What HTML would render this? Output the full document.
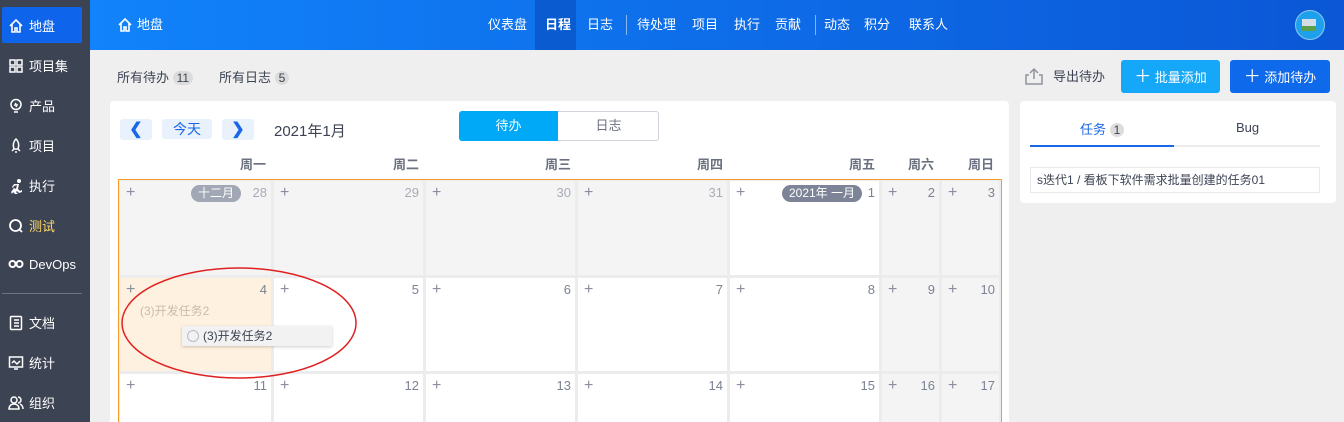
<!DOCTYPE html>
<html style="width:1344px;height:422px;overflow:hidden"><head><meta charset="utf-8"><style>
*{box-sizing:border-box;margin:0;padding:0}
html,body{overflow:hidden}
body{width:1344px;height:422px;overflow:hidden;background:#efefef;font-family:"Liberation Sans","Noto Sans CJK SC",sans-serif;font-size:13px;color:#3c4353;position:relative}
.abs{position:absolute}
#side{left:0;top:0;width:90px;height:422px;background:#3c4353}
.si{position:absolute;left:8px;color:#fff;font-size:13px;display:flex;align-items:center;gap:5px}
.si svg{width:16px;height:16px}
#top{left:90px;top:0;width:1254px;height:50px;background:linear-gradient(90deg,#1183fb,#0b57d6)}
.nav{position:absolute;top:0;height:50px;line-height:50px;color:#fff;font-size:13px}
.sep{position:absolute;top:15px;width:1px;height:20px;background:rgba(255,255,255,.5)}
.cell{position:absolute;background:#fff}
.cell.g{background:#f4f4f4}
.pl{position:absolute;left:6px;top:3px;color:#8a8fa0;font-size:16px;line-height:18px}
.dn{position:absolute;right:4px;top:4px;color:#7b8294;font-size:13px}
.cell.g .dn.o{color:#a7acb8}
.wk{position:absolute;top:154px;font-size:13px;color:#6b7180;font-weight:bold}
</style></head><body>
<div id="side" class="abs">
 <div class="abs" style="left:2px;top:7px;width:80px;height:36px;background:#0e64ea;border-radius:2px"></div>
 <div class="si" style="top:16px"><svg viewBox="0 0 16 16" fill="none" stroke="#fff" stroke-width="1.6"><path d="M2 8L8 2l6 6M4 6v8h3v-4h2v4h3V6"/></svg>地盘</div>
 <div class="si" style="top:56px"><svg viewBox="0 0 16 16" fill="none" stroke="#fff" stroke-width="1.5"><rect x="2" y="2" width="5" height="5"/><rect x="9" y="2" width="5" height="5"/><rect x="2" y="9" width="5" height="5"/><rect x="9" y="9" width="5" height="5"/></svg>项目集</div>
 <div class="si" style="top:96px"><svg viewBox="0 0 16 16" fill="none" stroke="#fff" stroke-width="1.5"><circle cx="8" cy="6.5" r="5"/><path d="M6 14h4M8 5l-1 2h2l-1 2"/></svg>产品</div>
 <div class="si" style="top:136px"><svg viewBox="0 0 16 16" fill="none" stroke="#fff" stroke-width="1.5"><path d="M8 1c3 3 3 7 2 10H6C5 8 5 4 8 1zM6 11l-2 2M10 11l2 2M8 13v2"/></svg>项目</div>
 <div class="si" style="top:176px"><svg viewBox="0 0 16 16" fill="#fff"><circle cx="11" cy="3" r="2"/><path d="M3 14l3-4 2 1 1-4-3 1-1 2-1-1 2-3h5l-1 5 2 2 2-1v2l-3 1-2-2-1 1 2 2h-3l-2-2-1 2z"/></svg>执行</div>
 <div class="si" style="top:216px;color:#ffd966"><svg viewBox="0 0 16 16" fill="none" stroke="#fff" stroke-width="1.8"><circle cx="7.5" cy="7.5" r="5.5"/><path d="M11 11l3 3"/></svg>测试</div>
 <div class="si" style="top:256px"><svg viewBox="0 0 16 16" fill="none" stroke="#fff" stroke-width="2"><circle cx="4.5" cy="8" r="3"/><circle cx="11.5" cy="8" r="3"/></svg>DevOps</div>
 <div class="abs" style="left:2px;top:293px;width:80px;height:1px;background:#6b7384"></div>
 <div class="si" style="top:313px"><svg viewBox="0 0 16 16" fill="none" stroke="#fff" stroke-width="1.5"><rect x="2.5" y="1.5" width="11" height="13" rx="1"/><path d="M6 5h5M6 8h5M6 11h5"/></svg>文档</div>
 <div class="si" style="top:353px"><svg viewBox="0 0 16 16" fill="none" stroke="#fff" stroke-width="1.5"><rect x="1.5" y="2" width="13" height="10"/><path d="M4 8l2-2 3 3 3-3M6 14h4"/></svg>统计</div>
 <div class="si" style="top:393px"><svg viewBox="0 0 16 16" fill="none" stroke="#fff" stroke-width="1.5"><circle cx="6" cy="5" r="3"/><path d="M1 14c0-3 2-5 5-5s5 2 5 5zM10 2a3 3 0 010 6M12 9c2 1 3 3 3 5"/></svg>组织</div>
</div>
<div id="top" class="abs">
 <div class="nav" style="left:27px;display:flex;align-items:center;gap:4px"><svg width="16" height="16" viewBox="0 0 16 16" fill="none" stroke="#fff" stroke-width="1.6"><path d="M2 8L8 2l6 6M4 6v8h3v-4h2v4h3V6"/></svg>地盘</div>
 <div class="nav" style="left:398px">仪表盘</div>
 <div class="abs" style="left:445px;top:0;width:41px;height:50px;background:#0a5bd0"></div>
 <div class="nav" style="left:455px;font-weight:bold">日程</div>
 <div class="nav" style="left:497px">日志</div>
 <div class="sep" style="left:536px"></div>
 <div class="nav" style="left:547px">待处理</div>
 <div class="nav" style="left:602px">项目</div>
 <div class="nav" style="left:644px">执行</div>
 <div class="nav" style="left:685px">贡献</div>
 <div class="sep" style="left:725px"></div>
 <div class="nav" style="left:734px">动态</div>
 <div class="nav" style="left:774px">积分</div>
 <div class="nav" style="left:819px">联系人</div>
 <div class="abs" style="left:1205px;top:10px;width:30px;height:30px;border-radius:50%;background:#1ea0ec;border:1px solid #8cc8f0"><div class="abs" style="left:6px;top:8px;width:14px;height:12px;background:#d5dde6;border-bottom:5px solid #5aa04a"></div></div>
</div>
<div class="abs" style="left:117px;top:67px">所有待办 <span style="display:inline-block;background:#dcdcdc;border-radius:8px;padding:0 4px;font-size:12px">11</span></div>
<div class="abs" style="left:219px;top:67px">所有日志 <span style="display:inline-block;background:#dcdcdc;border-radius:8px;padding:0 4px;font-size:12px">5</span></div>
<div class="abs" style="left:1024px;top:66px;color:#3c4353;display:flex;gap:9px;align-items:center"><svg width="20" height="18" viewBox="0 0 20 18" fill="none" stroke="#8f949e" stroke-width="1.5"><path d="M10 12V2M6 6l4-4 4 4M5 8H2v9h16V8h-3"/></svg>导出待办</div>
<div class="abs" style="left:1121px;top:60px;width:99px;height:33px;background:#16a8f8;border-radius:3px;color:#fff;line-height:33px;text-align:center;font-size:13px"><b style="font-size:17px;font-weight:normal">＋</b> 批量添加</div>
<div class="abs" style="left:1230px;top:60px;width:100px;height:33px;background:#0e6aea;border-radius:3px;color:#fff;line-height:33px;text-align:center;font-size:13px"><b style="font-size:17px;font-weight:normal">＋</b> 添加待办</div>

<div class="abs" style="left:110px;top:101px;width:899px;height:330px;background:#fff;border-radius:4px"></div>
<div class="abs" style="left:120px;top:119px;width:32px;height:21px;background:#e8f1fc;border-radius:3px;color:#1967e6;text-align:center;line-height:21px;font-weight:bold;font-size:16px">❮</div>
<div class="abs" style="left:162px;top:119px;width:50px;height:20px;background:#e8f1fc;border-radius:3px;color:#1967e6;text-align:center;line-height:20px;font-size:14px">今天</div>
<div class="abs" style="left:222px;top:119px;width:32px;height:21px;background:#e8f1fc;border-radius:3px;color:#1967e6;text-align:center;line-height:21px;font-weight:bold;font-size:16px">❯</div>
<div class="abs" style="left:274px;top:120px;font-size:15px;color:#3c4353">2021年1月</div>
<div class="abs" style="left:459px;top:111px;width:200px;height:30px;border:1px solid #d0d3da;border-radius:3px"></div>
<div class="abs" style="left:459px;top:111px;width:99px;height:30px;background:#00a8f8;border-radius:3px 0 0 3px;color:#fff;text-align:center;line-height:30px">待办</div>
<div class="abs" style="left:558px;top:111px;width:101px;height:30px;color:#6b7180;text-align:center;line-height:30px">日志</div>
<div class="wk" style="left:240px">周一</div><div class="wk" style="left:393px">周二</div><div class="wk" style="left:545px">周三</div><div class="wk" style="left:697px">周四</div><div class="wk" style="left:849px">周五</div><div class="wk" style="left:908px">周六</div><div class="wk" style="left:968px">周日</div>

<div class="abs" style="left:118px;top:179px;width:884px;height:260px;border:1px solid #f39c2c;background:#ececec"></div>
<div class="cell g" style="left:120px;top:181px;width:151px;height:94px"><span class="pl">+</span><span class="abs" style="right:30px;top:4px;background:#a2a7b5;color:#fff;border-radius:9px;padding:0 7px;font-size:12px;line-height:17px">十二月</span><span class="dn o">28</span></div>
<div class="cell g" style="left:274px;top:181px;width:149px;height:94px"><span class="pl">+</span><span class="dn o">29</span></div>
<div class="cell g" style="left:426px;top:181px;width:149px;height:94px"><span class="pl">+</span><span class="dn o">30</span></div>
<div class="cell g" style="left:578px;top:181px;width:149px;height:94px"><span class="pl">+</span><span class="dn o">31</span></div>
<div class="cell" style="left:730px;top:181px;width:149px;height:94px"><span class="pl">+</span><span class="abs" style="right:17px;top:4px;background:#7e8497;color:#fff;border-radius:9px;padding:0 7px;font-size:12px;line-height:17px">2021年 一月</span><span class="dn">1</span></div>
<div class="cell g" style="left:882px;top:181px;width:57px;height:94px"><span class="pl">+</span><span class="dn">2</span></div>
<div class="cell g" style="left:942px;top:181px;width:57px;height:94px"><span class="pl">+</span><span class="dn">3</span></div>
<div class="cell" style="left:120px;top:278px;width:151px;height:93px;background:#fff1df"><span class="pl">+</span><span class="dn">4</span><span class="abs" style="left:20px;top:24px;color:#c8bcae;font-size:12px">(3)开发任务2</span></div>
<div class="cell" style="left:274px;top:278px;width:149px;height:93px"><span class="pl">+</span><span class="dn">5</span></div>
<div class="cell" style="left:426px;top:278px;width:149px;height:93px"><span class="pl">+</span><span class="dn">6</span></div>
<div class="cell" style="left:578px;top:278px;width:149px;height:93px"><span class="pl">+</span><span class="dn">7</span></div>
<div class="cell" style="left:730px;top:278px;width:149px;height:93px"><span class="pl">+</span><span class="dn">8</span></div>
<div class="cell g" style="left:882px;top:278px;width:57px;height:93px"><span class="pl">+</span><span class="dn">9</span></div>
<div class="cell g" style="left:942px;top:278px;width:57px;height:93px"><span class="pl">+</span><span class="dn">10</span></div>
<div class="cell" style="left:120px;top:374px;width:151px;height:60px"><span class="pl">+</span><span class="dn">11</span></div>
<div class="cell" style="left:274px;top:374px;width:149px;height:60px"><span class="pl">+</span><span class="dn">12</span></div>
<div class="cell" style="left:426px;top:374px;width:149px;height:60px"><span class="pl">+</span><span class="dn">13</span></div>
<div class="cell" style="left:578px;top:374px;width:149px;height:60px"><span class="pl">+</span><span class="dn">14</span></div>
<div class="cell" style="left:730px;top:374px;width:149px;height:60px"><span class="pl">+</span><span class="dn">15</span></div>
<div class="cell g" style="left:882px;top:374px;width:57px;height:60px"><span class="pl">+</span><span class="dn">16</span></div>
<div class="cell g" style="left:942px;top:374px;width:57px;height:60px"><span class="pl">+</span><span class="dn">17</span></div>

<div class="abs" style="left:182px;top:326px;width:150px;height:20px;background:#f2f2f2;box-shadow:0 1px 3px rgba(0,0,0,.2);font-size:12px;line-height:20px;padding-left:21px;color:#3c4353"><span class="abs" style="left:5px;top:4px;width:12px;height:12px;border:1px solid #b8bccb;border-radius:50%"></span>(3)开发任务2</div>
<svg class="abs" style="left:120px;top:265px" width="240" height="117"><ellipse cx="119" cy="58" rx="117" ry="55" fill="none" stroke="#e02020" stroke-width="1.5"/></svg>

<div class="abs" style="left:1020px;top:101px;width:316px;height:102px;background:#fff;border-radius:4px"></div>
<div class="abs" style="left:1080px;top:119px;color:#1967e6">任务 <span style="display:inline-block;background:#ddd;color:#3c4353;border-radius:8px;padding:0 4px;font-size:12px">1</span></div>
<div class="abs" style="left:1236px;top:120px;color:#3c4353">Bug</div>
<div class="abs" style="left:1030px;top:145px;width:290px;height:2px;background:#ececec"></div>
<div class="abs" style="left:1030px;top:145px;width:144px;height:2px;background:#1967e6"></div>
<div class="abs" style="left:1030px;top:167px;width:290px;height:26px;border:1px solid #eaeaea;font-size:12px;line-height:24px;padding-left:6px;color:#3c4353">s迭代1 / 看板下软件需求批量创建的任务01</div>
</body></html>
